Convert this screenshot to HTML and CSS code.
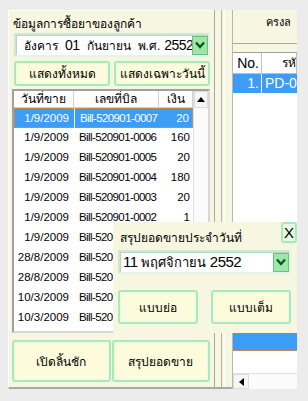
FILE: index.html
```html
<!DOCTYPE html>
<html>
<head>
<meta charset="utf-8">
<link rel="stylesheet" href="styles.css">
</head>
<body>
<div class="app">
  <div class="left">
    <div class="title">ข้อมูลการซื้อยาของลูกค้า</div>
    <div class="combo date">
      <span class="ctext"><span class="w">อังคาร</span><span class="w num">01</span><span class="w">กันยายน</span><span class="w2">พ.ศ.</span><span class="num">2552</span></span>
      <span class="dd"><svg width="10" height="8" viewBox="0 0 10 8"><path d="M1 1.5 L5 6 L9 1.5" fill="none" stroke="#0c5a1c" stroke-width="2.4"/></svg></span>
    </div>
    <div class="btnrow">
      <div class="btn">แสดงทั้งหมด</div>
      <div class="btn">แสดงเฉพาะวันนี้</div>
    </div>
    <div class="grid">
      <div class="gbody">
        <div class="ghead"><span>วันที่ขาย</span><span>เลขที่บิล</span><span>เงิน</span></div>
        <div class="grow sel"><span>1/9/2009</span><span>Bill-520901-0007</span><span>20</span></div>
        <div class="grow"><span>1/9/2009</span><span>Bill-520901-0006</span><span>160</span></div>
        <div class="grow"><span>1/9/2009</span><span>Bill-520901-0005</span><span>20</span></div>
        <div class="grow"><span>1/9/2009</span><span>Bill-520901-0004</span><span>180</span></div>
        <div class="grow"><span>1/9/2009</span><span>Bill-520901-0003</span><span>20</span></div>
        <div class="grow"><span>1/9/2009</span><span>Bill-520901-0002</span><span>1</span></div>
        <div class="grow"><span>1/9/2009</span><span>Bill-520901-0001</span><span>20</span></div>
        <div class="grow"><span>28/8/2009</span><span>Bill-520828-0002</span><span>20</span></div>
        <div class="grow"><span>28/8/2009</span><span>Bill-520828-0001</span><span>20</span></div>
        <div class="grow"><span>10/3/2009</span><span>Bill-520310-0002</span><span>20</span></div>
        <div class="grow"><span>10/3/2009</span><span>Bill-520310-0001</span><span>20</span></div>
      </div>
      <div class="vscroll">
        <div class="sbtn"><svg width="8" height="5" viewBox="0 0 8 5"><path d="M0 5 L4 0 L8 5 Z" fill="#000"/></svg></div>
        <div class="strack"></div>
      </div>
    </div>
    <div class="bottombtns">
      <div class="btn big">เปิดลิ้นชัก</div>
      <div class="btn big">สรุปยอดขาย</div>
    </div>
  </div>
  <div class="sep"><div class="sepin"></div></div>
  <div class="right">
    <div class="rtop"><span>ครงล</span></div>
    <div class="rgrid">
      <div class="rhead"><span class="c1">No.</span><span class="c2">รหั</span></div>
      <div class="rrow sel"><span class="c1">1.</span><span class="c2">PD-00</span></div>
      <div class="rspace"></div>
      <div class="rrow sel2"></div>
      <div class="rspace2"></div>
      <div class="hscroll"><div class="hbtn"><svg width="5" height="8" viewBox="0 0 5 8"><path d="M5 0 L0 4 L5 8 Z" fill="#000"/></svg></div><div class="htrack"></div></div>
    </div>
  </div>
  <div class="dialog">
    <div class="dhead">
      <span class="dtitle">สรุปยอดขายประจำวันที่</span>
      <span class="xbtn">X</span>
    </div>
    <div class="combo dcombo">
      <span class="ctext"><span class="num">11</span> พฤศจิกายน <span class="num">2552</span></span>
      <span class="dd"><svg width="10" height="8" viewBox="0 0 10 8"><path d="M1 1.5 L5 6 L9 1.5" fill="none" stroke="#0c5a1c" stroke-width="2.4"/></svg></span>
    </div>
    <div class="dbtns">
      <div class="btn dbtn">แบบย่อ</div>
      <div class="btn dbtn">แบบเต็ม</div>
    </div>
  </div>
</div>
</body>
</html>
```

FILE: styles.css
```css
* { box-sizing: border-box; }
html, body { margin: 0; padding: 0; }
body {
  width: 308px; height: 401px; overflow: hidden;
  background: #ececec;
  font-family: "Liberation Sans", "Noto Sans", sans-serif;
  font-size: 12px; color: #000;
}
.app {
  position: relative;
  display: grid;
  grid-template-columns: 206px 18px 65px;
  grid-template-rows: 379px;
  padding: 10px 11px 12px 8px;
  width: 308px;
  height: 401px;
}
.left {
  background: #f7f7e1;
  border-left: 1px solid #fff;
  border-top: 1px solid #fff;
  border-bottom: 2px solid #a8a8a8;
  padding: 0 4px 0 3px;
  display: grid;
  grid-template-rows: 22px 24px 29px 247px 49px;
  overflow: hidden;
}
.left > * { min-height: 0; overflow: hidden; }
.title { padding: 6px 0 0 1px; font-size: 12px; line-height: 14px; white-space: nowrap; }
.combo {
  display: flex; align-items: center;
  background: #fff;
  border: 2px solid #cfe8d6;
  border-right-color: #e4f4e7;
  border-bottom-color: #e4f4e7;
  box-shadow: inset 1px 1px 0 #b9d7c0;
  overflow: hidden;
}
.date { margin-left: 2px; }
.ctext { flex: 1; padding-left: 8px; font-size: 12px; white-space: nowrap; overflow: hidden; }
.num { font-size: 14px; letter-spacing: -0.5px; }
.w { margin-right: 7px; }
.w2 { margin-right: 4px; }
.dd {
  width: 16px; height: 19px; flex: none;
  background: #9fe6aa;
  border: 1px solid #6fc07f;
  display: flex; align-items: center; justify-content: center;
}
.btnrow { display: flex; gap: 4px; padding: 4px 0 0 2px; }
.btn {
  flex: 1;
  display: flex; align-items: center; justify-content: center;
  background: #fcfcdd;
  border: 2px solid #a8eab8;
  border-radius: 3px;
  box-shadow: inset 0 0 0 1px #e7fbe8;
  font-size: 12px; white-space: nowrap; overflow: hidden;
}
.grid {
  margin-top: 3px;
  display: flex;
  border: 2px solid #a0a0a0;
  border-right-color: #d8d8d8;
  border-bottom-color: #d8d8d8;
  background: #fff;
}
.gbody { width: 179px; flex: none; overflow: hidden; font-size: 11.5px; }
.ghead, .grow { display: grid; grid-template-columns: 60px 85px 34px; white-space: nowrap; }
.ghead { height: 17px; border-bottom: 1px solid #d0d0d0; }
.ghead span { text-align: center; border-right: 1px solid #d0d0d0; line-height: 16px; font-size: 12px; }
.grow { height: 20px; line-height: 18px; }
.grow span { overflow: hidden; }
.grow span:nth-child(1) { text-align: right; padding-right: 5px; }
.grow span:nth-child(2) { padding-left: 5px; letter-spacing: -0.6px; }
.grow span:nth-child(3) { text-align: right; padding-right: 3px; }
.grow.sel { background: #3d9cf5; color: #fff; }
.grow.sel span { border-top: 1px solid #c08a5a; border-bottom: 1px solid #c08a5a; }
.grow.sel span:nth-child(1) { border-left: 1px solid #c08a5a; }
.grow.sel span:nth-child(2) { border-left: 1px solid #fff; }
.grow.sel span:nth-child(3) { border-right: 1px solid #c08a5a; }
.vscroll { flex: 1; display: flex; flex-direction: column; border-left: 1px solid #e0e0e0; }
.sbtn {
  height: 17px; flex: none; display: flex; align-items: center; justify-content: center;
  background: #f6f6f6; border: 1px solid #dcdcdc;
}
.strack { flex: 1; background: #fbfbfb; }
.bottombtns { display: flex; gap: 1px; padding: 7px 0 0 0; }
.sep {
  background: #f7f7e1;
  border-left: 1px solid #a8a8a8;
  border-bottom: 2px solid #a8a8a8;
  padding: 0 7px 0 6px;
}
.sepin { height: 100%; border-left: 1px solid #b0b0b0; border-right: 1px solid #fff; }
.right {
  background: #f7f7e1;
  display: grid;
  grid-template-rows: 34px 1fr;
  border-left: 1px solid #b8b8b8;
  overflow: hidden;
}
.rtop { border-bottom: 1px solid #a8a8a8; text-align: right; padding: 3px 6px 0 0; font-size: 11px; overflow: hidden; white-space: nowrap; }
.rgrid {
  margin-top: 8px;
  background: #fff;
  border-top: 1px solid #a0a0a0;
  display: grid;
  grid-template-rows: 21px 19px 239px 19px 1fr 16px;
  overflow: hidden;
  min-height: 0;
}
.rhead, .rrow { display: flex; font-size: 14px; white-space: nowrap; overflow: hidden; }
.rhead span { border-right: 1px solid #c0c0c0; border-bottom: 1px solid #c0c0c0; line-height: 20px; }
.c1 { width: 29px; text-align: right; padding-right: 2px; flex: none; }
.c2 { flex: 1; padding-left: 3px; white-space: nowrap; overflow: hidden; }
.rhead .c2 { text-align: right; font-size: 12px; }
.rrow { line-height: 19px; }
.rrow.sel { background: #3d9cf5; color: #fff; }
.rrow.sel .c1 { border-right: 1px solid #fff; }
.rrow.sel2 { background: #3d9cf5; border-bottom: 1px solid #c08a5a; }
.hscroll { display: flex; border-top: 1px solid #e0e0e0; }
.hbtn { width: 16px; display: flex; align-items: center; justify-content: center; background: #f6f6f6; border: 1px solid #dcdcdc; }
.htrack { flex: 1; background: #fbfbfb; }
.dialog {
  position: absolute; left: 113px; top: 222px;
  width: 184px; height: 111px;
  background: #f7f7e1;
  padding: 0 6px 0 5px;
  display: grid;
  grid-template-rows: 28px 24px 50px;
}
.dhead { display: flex; justify-content: space-between; }
.dtitle { padding-top: 6px; padding-left: 2px; font-size: 12px; white-space: nowrap; }
.xbtn {
  width: 16px; height: 21px; margin-right: -6px;
  border: 2px solid #a8eab8; border-radius: 3px;
  background: #e9f8e4;
  display: flex; align-items: center; justify-content: center;
  font-size: 15px;
}
.dcombo { width: 173px; }
.dcombo .ctext { font-size: 13px; padding-left: 3px; }
.dcombo .num { font-size: 15px; }
.dbtns { display: flex; gap: 13px; padding-top: 16px; width: 173px; }
```
